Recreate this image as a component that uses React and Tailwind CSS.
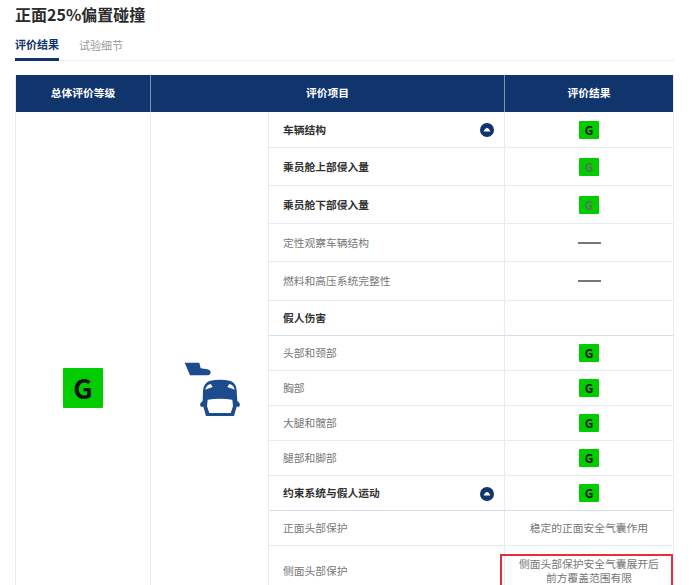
const CJK = "font-['Noto_Sans_CJK_SC','Noto_Sans',sans-serif]";

function Badge({ muted }) {
  return (
    <span className={`flex h-[18px] w-[20px] items-center justify-center rounded-[1px] bg-[#00cc00] text-[12px] font-bold ${muted ? 'text-[#5f6f5f]' : 'text-[#111]'}`}>
      G
    </span>
  );
}

function Toggle() {
  return (
    <svg width="14" height="14" viewBox="0 0 14 14" className="shrink-0">
      <circle cx="7" cy="7" r="7" fill="#10346c" />
      <path d="M3.6 8.6 C4.4 6.6 5.8 5 7 5 C8.2 5 9.6 6.6 10.4 8.6 Z" fill="#fff" />
    </svg>
  );
}

function DummyIcon() {
  return (
    <svg width="80" height="75" viewBox="0 0 240 225">
      <path d="M44 35 H88 L92 52 L112 55 Q122 58 122 65 Q120 73 110 73 H60 Z" fill="#1c4c8e" />
      <path
        fillRule="evenodd"
        fill="#1c4c8e"
        d="M98 150 L99 118 Q101 98 118 90 Q150 82 182 90 Q199 98 200 118 L202 150 L208 155 Q212 161 207 167 L200 167 L192 195 H108 L100 167 L93 167 Q88 161 92 155 Z M113 146 Q150 140 187 146 L189 166 L182 186 H118 L111 166 Z M122 99 Q108 103 106 116 Q118 112 128 108 Z M178 99 Q192 103 194 116 Q182 112 172 108 Z"
      />
    </svg>
  );
}

const dash = <span className="h-[2px] w-[23px] bg-[#777]" />;

const rows = [
  { h: 'h-[36px]', label: '车辆结构', bold: true, toggle: true, result: <Badge /> },
  { h: 'h-[38px]', label: '乘员舱上部侵入量', bold: true, result: <Badge muted /> },
  { h: 'h-[38px]', label: '乘员舱下部侵入量', bold: true, result: <Badge muted /> },
  { h: 'h-[38px]', label: '定性观察车辆结构', result: dash },
  { h: 'h-[39px]', label: '燃料和高压系统完整性', result: dash },
  { h: 'h-[35px]', label: '假人伤害', bold: true, strong: true },
  { h: 'h-[35px]', label: '头部和颈部', result: <Badge /> },
  { h: 'h-[35px]', label: '胸部', result: <Badge /> },
  { h: 'h-[35px]', label: '大腿和髋部', result: <Badge /> },
  { h: 'h-[35px]', label: '腿部和脚部', result: <Badge /> },
  { h: 'h-[35px]', label: '约束系统与假人运动', bold: true, toggle: true, strong: true, result: <Badge /> },
  { h: 'h-[35px]', label: '正面头部保护', result: <span>稳定的正面安全气囊作用</span> },
  {
    h: 'h-[50px]',
    label: '侧面头部保护',
    flagged: true,
    result: (
      <span className="text-center leading-[14px]">
        侧面头部保护安全气囊展开后
        <br />
        前方覆盖范围有限
      </span>
    ),
  },
];

function Row({ row }) {
  return (
    <div className={`flex ${row.h} border-b ${row.strong ? 'border-[#d5deec]' : 'border-[#e6ebf4]'}`}>
      <div className="flex w-[236px] items-center justify-between border-r border-[#e6ebf4] pl-[14px] pr-[10px] pt-[1px]">
        <span className={row.bold ? 'font-bold text-[#333]' : 'text-[#777]'}>{row.label}</span>
        {row.toggle && <Toggle />}
      </div>
      <div className="relative flex flex-1 items-center justify-center text-[#777]">
        {row.result}
        {row.flagged && (
          <div className="absolute left-[-5px] right-[0px] top-[8px] h-[40px] border-2 border-[#e62e3d]" />
        )}
      </div>
    </div>
  );
}

export default function App() {
  return (
    <div className={`h-[585px] w-[700px] overflow-hidden bg-white pl-[15px] pt-[2px] text-[10.75px] ${CJK}`}>
      <h1 className="h-[25px] text-[16px] leading-[24px] font-bold text-[#2b2b2b]">正面25%偏置碰撞</h1>

      <div className="mt-[3px] flex h-[31px] w-[659px] gap-[20px] border-b border-[#eceff4] text-[11px]">
        <div className="flex h-[31px] items-center border-b-[3px] border-[#10346c] font-bold text-[#10346c]">评价结果</div>
        <div className="flex h-[30px] items-center text-[#999]">试验细节</div>
      </div>

      <div className="mt-[14px] w-[659px] border-l border-r border-[#e6ebf4]">
        <div className="flex h-[37px] bg-[#10346c] font-bold text-white">
          <div className="flex w-[135px] items-center justify-center border-r border-[#7d93b5]">总体评价等级</div>
          <div className="flex w-[354px] items-center justify-center border-r border-[#7d93b5]">评价项目</div>
          <div className="flex flex-1 items-center justify-center">评价结果</div>
        </div>

        <div className="flex h-[552px]">
          <div className="flex w-[135px] items-center justify-center border-r border-[#e6ebf4]">
            <div className="flex h-[40px] w-[40px] items-center justify-center rounded-[1px] bg-[#00cc00] text-[27px] font-bold text-[#111]">G</div>
          </div>
          <div className="flex w-[118px] items-center justify-center border-r border-[#e6ebf4]">
            <DummyIcon />
          </div>
          <div className="flex-1">
            {rows.map((row) => (
              <Row key={row.label} row={row} />
            ))}
          </div>
        </div>
      </div>
    </div>
  );
}
